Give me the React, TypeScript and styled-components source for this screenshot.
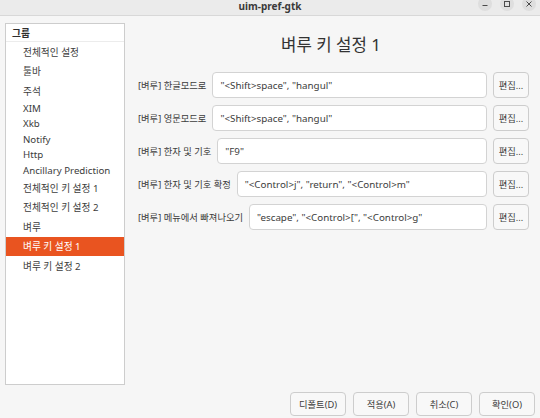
import styled, { createGlobalStyle } from 'styled-components';

const GlobalStyle = createGlobalStyle`
    html, body {
        margin: 0;
        padding: 0;
        background: #f6f6f6;
    }
    body {
        font-family: "Noto Sans", "Noto Sans CJK KR", sans-serif;
        color: #3c3c3c;
    }
`;

const Window = styled.div`
    width: 540px;
    height: 418px;
    display: flex;
    flex-direction: column;
    background: #f6f6f6;
    overflow: hidden;
`;

const TitleBar = styled.header`
    height: 16px;
    flex-shrink: 0;
    display: grid;
    grid-template-columns: 1fr auto 1fr;
    align-items: start;
    background: #ebebeb;
    border-bottom: 1px solid #d8d8d8;
    box-sizing: border-box;
`;

const WindowTitle = styled.span`
    grid-column: 2;
    font-size: 10px;
    font-weight: 700;
    line-height: 13px;
    color: #3a3a3a;
`;

const Controls = styled.div`
    grid-column: 3;
    justify-self: end;
    display: flex;
    gap: 8px;
    padding-right: 4px;
    margin-top: -3px;
`;

const ControlButton = styled.span`
    width: 14px;
    height: 14px;
    border-radius: 50%;
    background: #dedede;
    display: flex;
    align-items: center;
    justify-content: center;
    color: #4a4a4a;
`;

const Body = styled.div`
    flex: 1;
    display: flex;
    padding: 7px 0 0 5px;
    min-height: 0;
`;

const Sidebar = styled.nav`
    width: 120px;
    flex-shrink: 0;
    background: #ffffff;
    border: 1px solid #cdcdcd;
    box-sizing: border-box;
    font-size: 9.7px;
`;

const SidebarHeader = styled.div`
    height: 17px;
    display: flex;
    align-items: center;
    padding-left: 6px;
    font-weight: 700;
    color: #2e2e2e;
    border-bottom: 1px solid #ececec;
`;

const SidebarItem = styled.div<{ $tall: boolean; $selected?: boolean }>`
    height: ${p => (p.$tall ? '19.5px' : '15.5px')};
    display: flex;
    align-items: center;
    padding-left: 17px;
    white-space: nowrap;
    background: ${p => (p.$selected ? '#e95420' : 'transparent')};
    color: ${p => (p.$selected ? '#ffffff' : '#3c3c3c')};
`;

const Main = styled.main`
    flex: 1;
    display: flex;
    flex-direction: column;
    padding: 11px 11px 0 8px;
`;

const Heading = styled.h1`
    margin: 0 0 16px;
    font-size: 16.8px;
    font-weight: 400;
    line-height: 22px;
    text-align: center;
    color: #333333;
`;

const Form = styled.div`
    display: flex;
    flex-direction: column;
    gap: 7px;
`;

const Row = styled.div`
    display: flex;
    align-items: center;
    gap: 6px;
    height: 26px;
`;

const Label = styled.span`
    font-size: 9.3px;
    white-space: nowrap;
    padding-left: 5px;
    color: #3c3c3c;
`;

const Entry = styled.div`
    flex: 1;
    height: 26px;
    box-sizing: border-box;
    background: #ffffff;
    border: 1px solid #d3d3d3;
    border-radius: 4px;
    display: flex;
    align-items: center;
    padding-left: 7px;
    font-size: 9.8px;
    white-space: nowrap;
    overflow: hidden;
`;

const Button = styled.button<{ $width: number; $height: number }>`
    width: ${p => p.$width}px;
    height: ${p => p.$height}px;
    padding: 0;
    flex-shrink: 0;
    box-sizing: border-box;
    background: #f8f8f8;
    border: 1px solid #cdcdcd;
    border-radius: 4px;
    font-family: inherit;
    font-size: 9.3px;
    color: #3c3c3c;
    white-space: nowrap;
`;

const Footer = styled.footer`
    display: flex;
    justify-content: flex-end;
    gap: 7px;
    padding: 7px 5px 2px 0;
`;

const groups = [
    '전체적인 설정',
    '툴바',
    '주석',
    'XIM',
    'Xkb',
    'Notify',
    'Http',
    'Ancillary Prediction',
    '전체적인 키 설정 1',
    '전체적인 키 설정 2',
    '벼루',
    '벼루 키 설정 1',
    '벼루 키 설정 2',
];

const settings = [
    { label: '[벼루] 한글모드로', value: '"<Shift>space", "hangul"' },
    { label: '[벼루] 영문모드로', value: '"<Shift>space", "hangul"' },
    { label: '[벼루] 한자 및 기호', value: '"F9"' },
    { label: '[벼루] 한자 및 기호 확정', value: '"<Control>j", "return", "<Control>m"' },
    { label: '[벼루] 메뉴에서 빠져나오기', value: '"escape", "<Control>[", "<Control>g"' },
];

const hasHangul = (s: string) => /[\uac00-\ud7a3]/.test(s);

const App = () => {
    return <>
        <GlobalStyle />
        <Window>
            <TitleBar>
                <WindowTitle>uim-pref-gtk</WindowTitle>
                <Controls>
                    <ControlButton>
                        <svg width="6" height="6" viewBox="0 0 6 6">
                            <path d="M0.5 4.5h5" stroke="currentColor" strokeWidth="1" />
                        </svg>
                    </ControlButton>
                    <ControlButton>
                        <svg width="6" height="6" viewBox="0 0 6 6">
                            <rect x="0.5" y="0.5" width="5" height="5" fill="none" stroke="currentColor" strokeWidth="1" />
                        </svg>
                    </ControlButton>
                    <ControlButton>
                        <svg width="6" height="6" viewBox="0 0 6 6">
                            <path d="M0.5 0.5l5 5M5.5 0.5l-5 5" stroke="currentColor" strokeWidth="1" />
                        </svg>
                    </ControlButton>
                </Controls>
            </TitleBar>
            <Body>
                <Sidebar>
                    <SidebarHeader>그룹</SidebarHeader>
                    {groups.map(g => (
                        <SidebarItem key={g} $tall={hasHangul(g)} $selected={g === '벼루 키 설정 1'}>
                            {g}
                        </SidebarItem>
                    ))}
                </Sidebar>
                <Main>
                    <Heading>벼루 키 설정 1</Heading>
                    <Form>
                        {settings.map(s => (
                            <Row key={s.label}>
                                <Label>{s.label}</Label>
                                <Entry>{s.value}</Entry>
                                <Button $width={36} $height={26}>편집...</Button>
                            </Row>
                        ))}
                    </Form>
                </Main>
            </Body>
            <Footer>
                <Button $width={56} $height={24}>디폴트(D)</Button>
                <Button $width={56} $height={24}>적용(A)</Button>
                <Button $width={56} $height={24}>취소(C)</Button>
                <Button $width={56} $height={24}>확인(O)</Button>
            </Footer>
        </Window>
    </>;
};

export default App;
